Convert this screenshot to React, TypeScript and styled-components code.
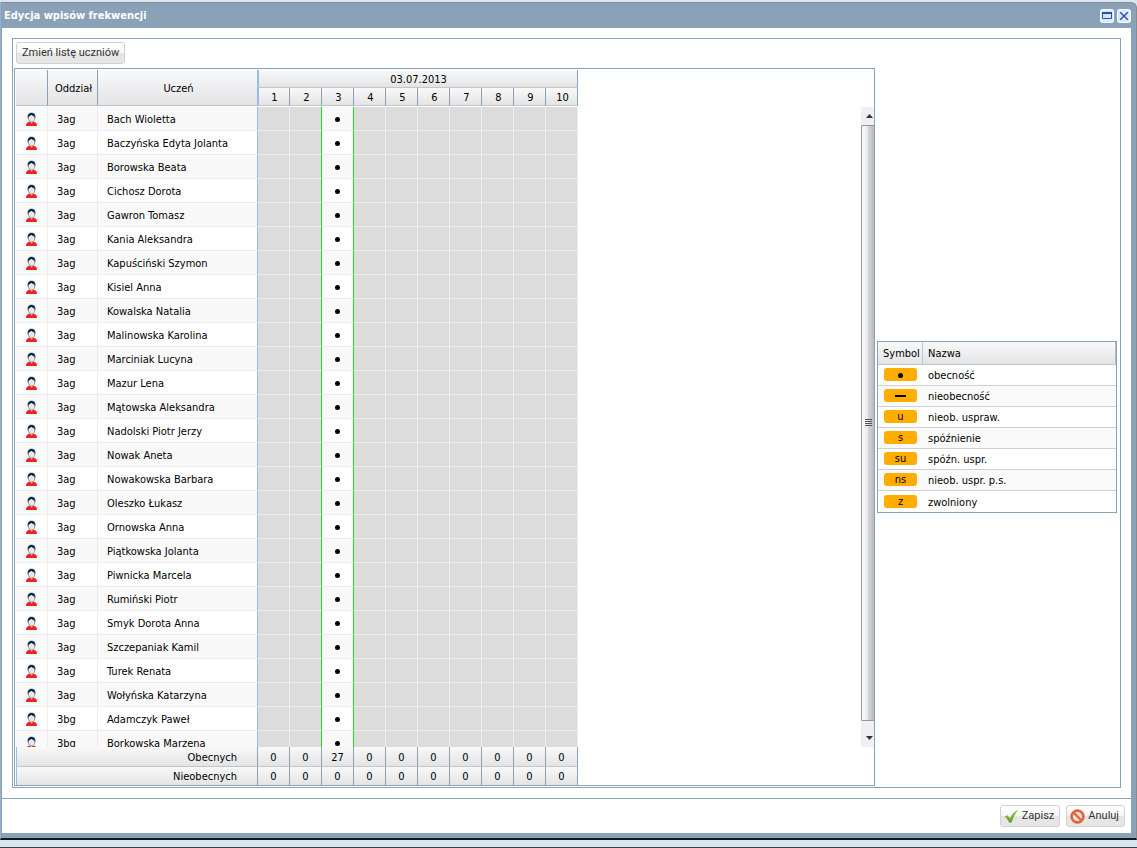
import React from 'react';
import styled, { createGlobalStyle } from 'styled-components';

const LINE = '#8aa2b8';

const GlobalStyle = createGlobalStyle`
  *, *::before, *::after { box-sizing: border-box; }
  body {
    margin: 0;
    background: #d9e5f3;
    color: #000;
    font-family: Tahoma, "DejaVu Sans Condensed", "Noto Sans", sans-serif;
    font-size: 11px;
    line-height: 14px;
  }
  button { font: inherit; color: inherit; padding: 0; margin: 0; cursor: pointer; }
  table { border-collapse: separate; border-spacing: 0; table-layout: fixed; }
  th, td { padding: 0; font-weight: normal; }
`;

const Desktop = styled.div`
  height: 100vh;
  padding: 2px 0 7px;
  border-bottom: 1px solid #3c3c3c;
`;

const Window = styled.section`
  display: flex;
  flex-direction: column;
  height: 100%;
  padding: 0 5px 5px 1px;
  background: ${LINE};
  border: 1px solid #858b91;
  border-bottom: 2px solid #15181b;
  border-left-color: #93b0cd;
  border-radius: 0 6px 0 0;
`;

const TitleBar = styled.header`
  flex: none;
  display: flex;
  align-items: center;
  gap: 3px;
  height: 25px;
  padding: 0 0 0 2px;
`;

const Title = styled.h1`
  flex: 1;
  margin: 0;
  font-size: 11px;
  line-height: 14px;
  font-weight: bold;
  color: #fff;
`;

const ToolButton = styled.button`
  display: flex;
  width: 14px;
  height: 14px;
  border: 0;
  background: none;
`;

const Content = styled.main`
  flex: 1;
  min-height: 0;
  display: flex;
  padding: 10px;
  background: #fff;
`;

const Panel = styled.div`
  flex: 1;
  min-width: 0;
  display: flex;
  flex-direction: column;
  border: 1px solid ${LINE};
  padding: 0 3px 1px 1px;
`;

const Toolbar = styled.div`
  flex: none;
  height: 29px;
  padding: 3px 2px;
`;

const PushButton = styled.button<{ $icon?: boolean }>`
  display: inline-flex;
  align-items: center;
  justify-content: center;
  gap: 3px;
  height: 22px;
  padding: ${(p) => (p.$icon ? '0 5px 0 3px' : '0 5px')};
  border: 1px solid #d1d1d1;
  border-radius: 3px;
  background: linear-gradient(#fff, #f7f7f7 48%, #e4e4e4 50%, #e7e7e7);
  color: #333;
  font-family: Tahoma, Roboto, sans-serif;
  line-height: 16px;
  white-space: nowrap;
`;

const Split = styled.div`
  flex: 1;
  min-height: 0;
  display: flex;
  align-items: center;
  gap: 2px;
`;

const GridPanel = styled.div`
  flex: 1;
  min-width: 0;
  align-self: stretch;
  display: flex;
  flex-direction: column;
  padding: 1px 0 0 1px;
  border: 1px solid ${LINE};
`;

const GridTable = styled.table`
  flex: none;
  width: 562px;
`;

const HeadCell = styled.th<{ $locked?: boolean }>`
  height: 18px;
  padding: 2px 0 0 2px;
  background: linear-gradient(#f9f9f9, #e3e4e6);
  border-right: ${(p) => (p.$locked ? '1px solid #99bbe8' : `1px solid ${LINE}`)};
  border-bottom: 1px solid #c5c5c5;
  tr:first-child > &:last-child { box-shadow: inset 1px 0 #99bbe8; }
  tr:last-child > &:first-child { box-shadow: inset 1px 0 #99bbe8; }
`;

const Scroller = styled.div`
  flex: 1;
  min-height: 0;
  display: flex;
  justify-content: space-between;
  margin-top: 1px;
`;

const Viewport = styled.div`
  overflow: hidden;
`;

const BodyRow = styled.tr`
  height: 24px;
  background: #fff;
  &:nth-child(odd) { background: #f9f9f9; }
`;

const Cell = styled.td<{ $last?: boolean }>`
  height: 24px;
  padding: 3px 0 0 9px;
  border-right: 1px solid ${(p) => (p.$last ? '#99bbe8' : '#ededed')};
  border-bottom: 1px solid #ededed;
  white-space: nowrap;
`;

const IconCell = styled(Cell)`
  padding-top: 1px;
  svg { display: block; }
`;

const MarkCell = styled.td<{ $open: boolean; $green: boolean }>`
  height: 24px;
  padding-top: 2px;
  text-align: center;
  border-right: 1px solid ${(p) => (p.$green ? '#14e614' : '#ededed')};
  border-bottom: 1px solid #ededed;
  background: ${(p) => (p.$open ? 'transparent' : '#dcdcdc')};
`;

const Dot = styled.span`
  display: inline-block;
  width: 5px;
  height: 5px;
  border-radius: 50%;
  background: #000;
  vertical-align: middle;
`;

const Dash = styled.span`
  display: block;
  width: 11px;
  height: 2px;
  background: #000;
`;

const ScrollBar = styled.div`
  flex: none;
  display: flex;
  flex-direction: column;
  width: 13px;
  background: #f0f0f0;
  overflow: hidden;
`;

const ScrollArrow = styled.button`
  flex: none;
  display: flex;
  align-items: center;
  justify-content: center;
  height: 18px;
  padding-left: 3px;
  border: 0;
  background: none;
`;

const Thumb = styled.div`
  flex: 1;
  display: flex;
  align-items: center;
  padding-left: 3px;
  border: 1px solid #979797;
  border-right: 0;
  border-radius: 2px 0 0 2px;
  background: linear-gradient(90deg, #fafafa, #ececee 45%, #d6d6da 50%, #b9bac0);
`;

const ScrollEnd = styled.div`
  flex: none;
  display: flex;
  flex-direction: column;
  justify-content: flex-end;
  height: 26px;
`;

const SumCell = styled.td<{ $label?: boolean; $bottom?: boolean }>`
  height: ${(p) => (p.$bottom ? '18px' : '20px')};
  padding-top: 2px;
  padding-right: ${(p) => (p.$label ? '20px' : '0')};
  text-align: ${(p) => (p.$label ? 'right' : 'center')};
  background: linear-gradient(#f9f9f9, #e3e4e6);
  border-left: ${(p) => (p.$label ? '1px solid #99bbe8' : '0')};
  border-right: 1px solid ${LINE};
  border-bottom: ${(p) => (p.$bottom ? '0' : '1px solid #c5c5c5')};
`;

const Legend = styled.table`
  flex: none;
  width: 240px;
  border: 1px solid ${LINE};
`;

const LegendHead = styled.th<{ $last?: boolean }>`
  height: 23px;
  padding: 2px 0 0 5px;
  text-align: left;
  background: linear-gradient(#f9f9f9, #e3e4e6);
  border-right: 1px solid ${(p) => (p.$last ? '#b5bec7' : '#c5c5c5')};
  border-bottom: 1px solid #c5c5c5;
`;

const LegendRow = styled.tr`
  td { height: 21px; padding: 2px 0 0 5px; border-bottom: 1px solid #d0d0d0; }
  td:first-child { padding: 0 0 1px 6px; }
  &:nth-child(even) { background: #fafafa; }
  &:last-child td { border-bottom: 0; }
`;

const Badge = styled.span`
  display: flex;
  align-items: center;
  justify-content: center;
  width: 33px;
  height: 13px;
  padding-top: 1px;
  border-radius: 3px;
  background: #ffae00;
`;

const Footer = styled.footer`
  flex: none;
  display: flex;
  justify-content: flex-end;
  align-items: flex-start;
  gap: 6px;
  height: 35px;
  padding: 6px;
  background: #fff;
  border-top: 1px solid ${LINE};
`;

function PersonIcon() {
  return (
    <svg width="13" height="14" viewBox="0 0 13 14" aria-hidden="true">
      <path d="M1 14C1 11 2.500 9.500 6.500 9.500S12 11 12 14Z" fill="#ee2424" />
      <path d="M4.600 9.400h3.800L6.500 11.400Z" fill="#f7b1ac" />
      <ellipse cx="6.500" cy="5.800" rx="3.700" ry="4.300" fill="#8d939a" />
      <ellipse cx="6.600" cy="6.200" rx="2.700" ry="3.300" fill="#e9e9e7" />
      <path d="M2.600 6.200C2.300 2.400 4.200.8 6.500.8s4.300 1.600 3.900 5.400L9.400 4.600C8.200 4.200 7 3.700 6.300 3.100 5.600 3.700 4.600 4.200 3.700 4.600Z" fill="#0e2f50" />
    </svg>
  );
}

function CheckIcon() {
  return (
    <svg width="15" height="15" viewBox="0 0 15 15" aria-hidden="true">
      <defs>
        <linearGradient id="check" x1="0" y1="0" x2="0" y2="1">
          <stop offset="0" stopColor="#9bd151" />
          <stop offset="1" stopColor="#5d9f27" />
        </linearGradient>
      </defs>
      <path d="M.5 7.600 3.400 6.300 6 9.200C7.800 5.200 10.200 2.400 14.300.5 11.600 4 9.200 8.600 7.500 13.600L5.200 13.800C4 11.200 2.500 9.200.5 7.600Z" fill="url(#check)" />
    </svg>
  );
}

function ForbidIcon() {
  return (
    <svg width="15" height="15" viewBox="0 0 15 15" aria-hidden="true">
      <circle cx="7.500" cy="7.500" r="5.700" fill="#fbe9e2" stroke="#e4683c" strokeWidth="2.400" />
      <path d="M3.600 3.600 11.400 11.400" stroke="#e4683c" strokeWidth="2.400" />
      <circle cx="7.500" cy="7.500" r="6.800" fill="none" stroke="#c24a24" strokeWidth=".5" />
    </svg>
  );
}

function MaximizeIcon() {
  return (
    <svg width="14" height="14" viewBox="0 0 14 14" aria-hidden="true">
      <rect x=".5" y=".5" width="13" height="13" rx="2" fill="#dbe9fb" stroke="#fff" />
      <path d="M2.500 4.500h9v5h-9z" fill="#d5e6fb" stroke="#2a4fa3" />
      <path d="M2 4h10" stroke="#2a4fa3" strokeWidth="2" />
    </svg>
  );
}

function CloseIcon() {
  return (
    <svg width="14" height="14" viewBox="0 0 14 14" aria-hidden="true">
      <rect x=".5" y=".5" width="13" height="13" rx="2" fill="#dbe9fb" stroke="#fff" />
      <path d="M3.200 3.200 10.800 10.800M10.800 3.200 3.200 10.800" stroke="#2a4fa3" strokeWidth="1.400" />
    </svg>
  );
}

const lessons = [1, 2, 3, 4, 5, 6, 7, 8, 9, 10];
const ACTIVE = 3;

const students: [string, string][] = [
  ['3ag', 'Bach Wioletta'],
  ['3ag', 'Baczyńska Edyta Jolanta'],
  ['3ag', 'Borowska Beata'],
  ['3ag', 'Cichosz Dorota'],
  ['3ag', 'Gawron Tomasz'],
  ['3ag', 'Kania Aleksandra'],
  ['3ag', 'Kapuściński Szymon'],
  ['3ag', 'Kisiel Anna'],
  ['3ag', 'Kowalska Natalia'],
  ['3ag', 'Malinowska Karolina'],
  ['3ag', 'Marciniak Lucyna'],
  ['3ag', 'Mazur Lena'],
  ['3ag', 'Mątowska Aleksandra'],
  ['3ag', 'Nadolski Piotr Jerzy'],
  ['3ag', 'Nowak Aneta'],
  ['3ag', 'Nowakowska Barbara'],
  ['3ag', 'Oleszko Łukasz'],
  ['3ag', 'Ornowska Anna'],
  ['3ag', 'Piątkowska Jolanta'],
  ['3ag', 'Piwnicka Marcela'],
  ['3ag', 'Rumiński Piotr'],
  ['3ag', 'Smyk Dorota Anna'],
  ['3ag', 'Szczepaniak Kamil'],
  ['3ag', 'Turek Renata'],
  ['3ag', 'Wołyńska Katarzyna'],
  ['3bg', 'Adamczyk Paweł'],
  ['3bg', 'Borkowska Marzena'],
];

const symbols: [React.ReactNode, string][] = [
  [<Dot />, 'obecność'],
  [<Dash />, 'nieobecność'],
  ['u', 'nieob. uspraw.'],
  ['s', 'spóźnienie'],
  ['su', 'spóźn. uspr.'],
  ['ns', 'nieob. uspr. p.s.'],
  ['z', 'zwolniony'],
];

const Col = styled.col<{ $width: number }>`
  width: ${(p) => p.$width}px;
`;

function Columns() {
  return (
    <colgroup>
      <Col $width={32} />
      <Col $width={50} />
      <Col $width={160} />
      {lessons.map((n) => (
        <Col key={n} $width={32} />
      ))}
    </colgroup>
  );
}

export default function App() {
  return (
    <Desktop>
      <GlobalStyle />
      <Window>
        <TitleBar>
          <Title>Edycja wpisów frekwencji</Title>
          <ToolButton type="button" aria-label="Maksymalizuj"><MaximizeIcon /></ToolButton>
          <ToolButton type="button" aria-label="Zamknij"><CloseIcon /></ToolButton>
        </TitleBar>
        <Content>
          <Panel>
            <Toolbar>
              <PushButton type="button">Zmień listę uczniów</PushButton>
            </Toolbar>
            <Split>
              <GridPanel>
                <GridTable>
                  <Columns />
                  <thead>
                    <tr>
                      <HeadCell rowSpan={2} aria-label="Ikona" />
                      <HeadCell rowSpan={2}>Oddział</HeadCell>
                      <HeadCell rowSpan={2} $locked>Uczeń</HeadCell>
                      <HeadCell colSpan={10}>03.07.2013</HeadCell>
                    </tr>
                    <tr>
                      {lessons.map((n) => (
                        <HeadCell key={n}>{n}</HeadCell>
                      ))}
                    </tr>
                  </thead>
                </GridTable>
                <Scroller>
                  <Viewport>
                    <GridTable>
                      <Columns />
                      <tbody>
                        {students.map(([unit, name]) => (
                          <BodyRow key={name}>
                            <IconCell><PersonIcon /></IconCell>
                            <Cell>{unit}</Cell>
                            <Cell $last>{name}</Cell>
                            {lessons.map((n) => (
                              <MarkCell key={n} $open={n === ACTIVE} $green={n === ACTIVE || n === ACTIVE - 1}>
                                {n === ACTIVE && <Dot />}
                              </MarkCell>
                            ))}
                          </BodyRow>
                        ))}
                      </tbody>
                    </GridTable>
                  </Viewport>
                  <ScrollBar>
                    <ScrollArrow type="button" aria-label="W górę">
                      <svg width="7" height="4" viewBox="0 0 7 4"><path d="M0 4 3.500 0 7 4Z" fill="#333" /></svg>
                    </ScrollArrow>
                    <Thumb>
                      <svg width="8" height="8" viewBox="0 0 8 8"><path d="M0 .5h7M0 2.500h7M0 4.500h7M0 6.500h7" stroke="#555" /></svg>
                    </Thumb>
                    <ScrollEnd>
                      <ScrollArrow type="button" aria-label="W dół">
                        <svg width="7" height="4" viewBox="0 0 7 4"><path d="M0 0 3.500 4 7 0Z" fill="#333" /></svg>
                      </ScrollArrow>
                    </ScrollEnd>
                  </ScrollBar>
                </Scroller>
                <GridTable>
                  <Columns />
                  <tbody>
                    <tr>
                      <SumCell colSpan={3} $label>Obecnych</SumCell>
                      {lessons.map((n) => (
                        <SumCell key={n}>{n === ACTIVE ? 27 : 0}</SumCell>
                      ))}
                    </tr>
                    <tr>
                      <SumCell colSpan={3} $label $bottom>Nieobecnych</SumCell>
                      {lessons.map((n) => (
                        <SumCell key={n} $bottom>0</SumCell>
                      ))}
                    </tr>
                  </tbody>
                </GridTable>
              </GridPanel>
              <Legend>
                <colgroup>
                  <Col $width={45} />
                  <col />
                </colgroup>
                <thead>
                  <tr>
                    <LegendHead>Symbol</LegendHead>
                    <LegendHead $last>Nazwa</LegendHead>
                  </tr>
                </thead>
                <tbody>
                  {symbols.map(([mark, name]) => (
                    <LegendRow key={name}>
                      <td><Badge>{mark}</Badge></td>
                      <td>{name}</td>
                    </LegendRow>
                  ))}
                </tbody>
              </Legend>
            </Split>
          </Panel>
        </Content>
        <Footer>
          <PushButton type="button" $icon><CheckIcon />Zapisz</PushButton>
          <PushButton type="button" $icon><ForbidIcon />Anuluj</PushButton>
        </Footer>
      </Window>
    </Desktop>
  );
}
